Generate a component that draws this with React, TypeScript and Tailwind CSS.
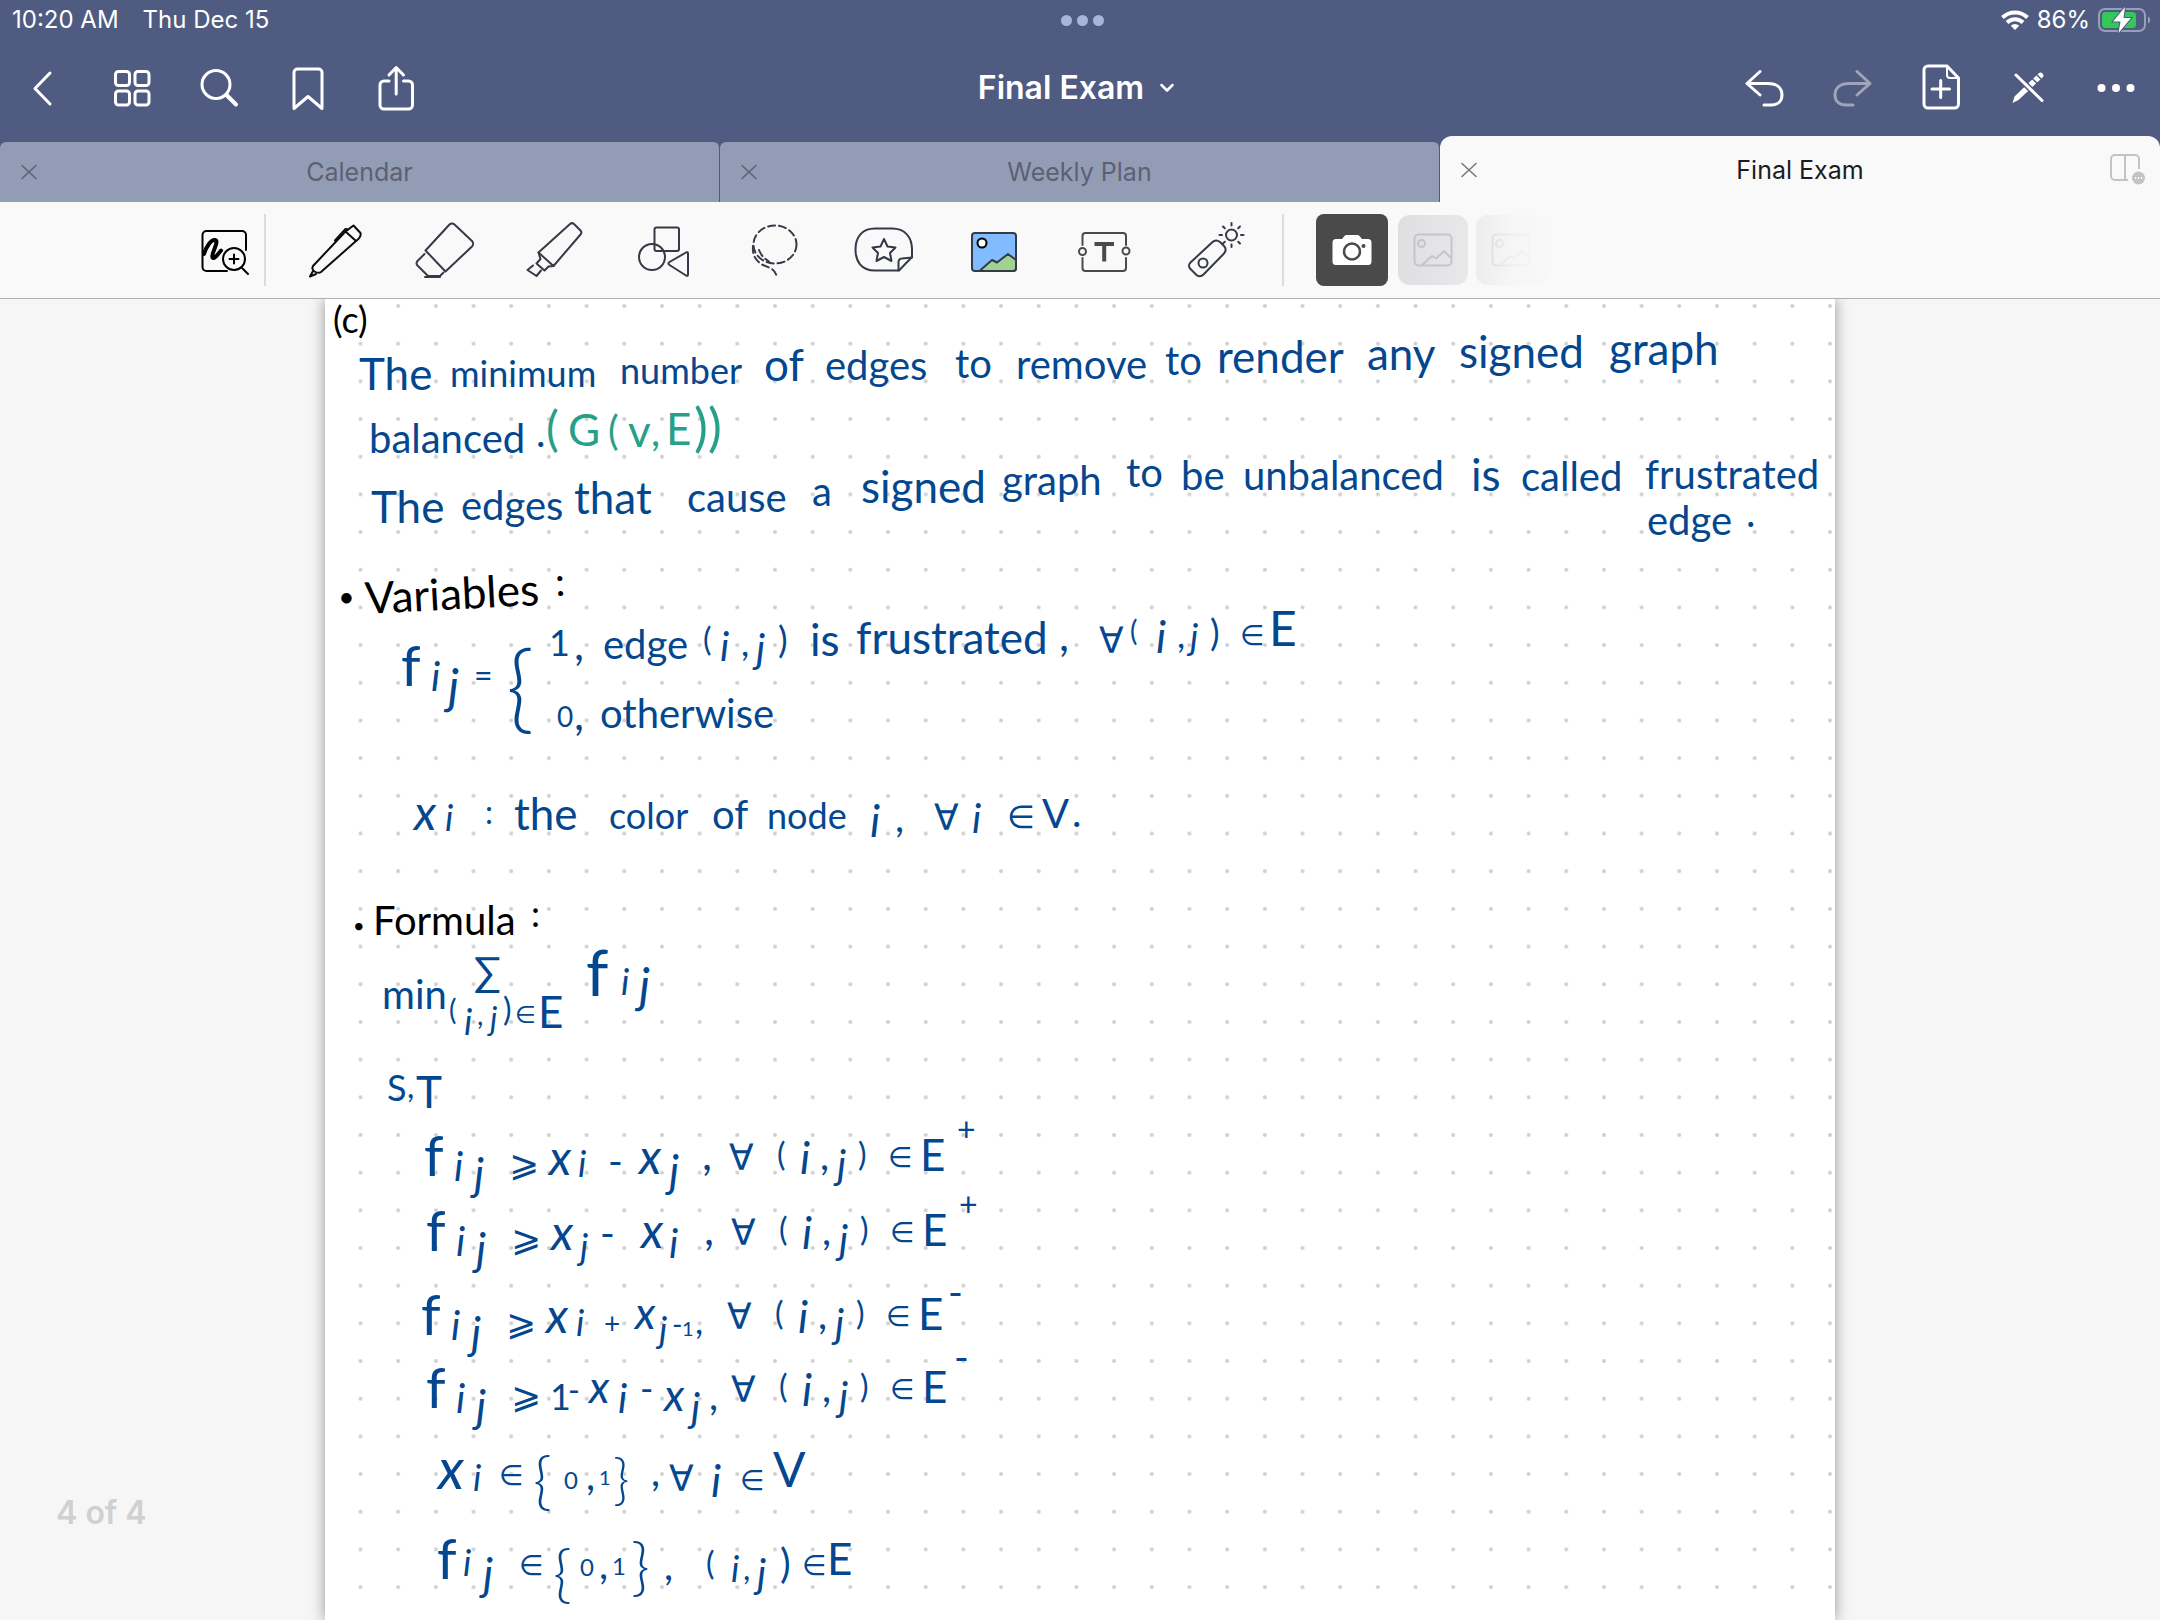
import React from 'react';

type Mark = [text: string, x: number, baseline: number, size: number, italic?: 1];
type Line = { ink: 'black' | 'blue' | 'green'; rising?: boolean; marks: Mark[] };

// Document coordinates of the visible page's top left corner.
const ORIGIN = { x: 325, y: 299 };

const shift = (marks: Mark[], dx: number, dy: number): Mark[] =>
  marks.map(([t, x, y, s, i]) => [t, x + dx, y + dy, s, i]);

const constraintHead: Mark[] = [
  ['f', 424, 1177, 56],
  ['i', 454, 1181, 40, 1],
  ['j', 474, 1190, 44, 1],
  ['⩾', 509, 1176, 36],
];

const constraintTail: Mark[] = [
  ['∀', 729, 1170, 36],
  ['(', 777, 1166, 32],
  ['i', 800, 1174, 44, 1],
  [',', 820, 1170, 40],
  ['j', 837, 1179, 40, 1],
  [')', 858, 1166, 32],
  ['∈', 888, 1167, 28],
  ['E', 920, 1171, 44],
];

const lines: Line[] = [
  { ink: 'black', marks: [['(c)', 333, 333, 36]] },
  {
    ink: 'blue',
    marks: [
      ['The', 359, 390, 44],
      ['minimum', 450, 387, 36],
      ['number', 620, 384, 36],
      ['of', 764, 381, 44],
      ['edges', 825, 380, 40],
      ['to', 955, 378, 40],
      ['remove', 1016, 379, 40],
      ['to', 1165, 375, 40],
      ['render', 1217, 373, 44],
      ['any', 1367, 370, 44],
      ['signed', 1459, 368, 44],
      ['graph', 1609, 365, 44],
    ],
  },
  { ink: 'blue', marks: [['balanced', 369, 453, 40], ['.', 536, 447, 40]] },
  {
    ink: 'green',
    marks: [
      ['(', 546, 447, 48],
      ['G', 568, 446, 44],
      ['(', 608, 445, 40],
      ['v', 628, 447, 44],
      [',', 651, 446, 40],
      ['E', 666, 445, 44],
      ['))', 694, 446, 52],
    ],
  },
  {
    ink: 'blue',
    marks: [
      ['The', 371, 523, 44],
      ['edges', 461, 520, 40],
      ['that', 574, 514, 44],
      ['cause', 687, 512, 40],
      ['a', 812, 506, 40],
      ['signed', 861, 503, 44],
      ['graph', 1002, 495, 40],
      ['to', 1126, 487, 40],
      ['be', 1181, 490, 40],
      ['unbalanced', 1243, 490, 40],
      ['is', 1471, 491, 44],
      ['called', 1521, 491, 40],
      ['frustrated', 1645, 489, 40],
      ['edge', 1647, 535, 40],
      ['.', 1746, 527, 40],
    ],
  },
  { ink: 'black', rising: true, marks: [['•', 339, 607, 28], ['Variables', 366, 614, 44], [':', 556, 596, 40]] },
  {
    ink: 'blue',
    marks: [
      ['f', 401, 687, 56],
      ['i', 431, 691, 40, 1],
      ['j', 448, 705, 48, 1],
      ['=', 474, 687, 32],
      ['{', 506, 721, 96],
      ['1', 549, 656, 36],
      [',', 574, 660, 44],
      ['edge', 603, 659, 40],
      ['(', 703, 651, 32],
      ['i', 720, 661, 40, 1],
      [',', 741, 656, 36],
      ['j', 756, 663, 40, 1],
      [')', 778, 653, 36],
      ['is', 810, 656, 44],
      ['frustrated', 856, 654, 44],
      [',', 1059, 651, 44],
      ['∀', 1099, 653, 36],
      ['(', 1130, 641, 28],
      ['i', 1156, 653, 44, 1],
      [',', 1177, 648, 36],
      ['j', 1190, 650, 36, 1],
      [')', 1210, 646, 36],
      ['∈', 1240, 645, 28],
      ['E', 1269, 647, 48],
      ['0', 557, 727, 28],
      [',', 574, 730, 44],
      ['otherwise', 600, 728, 40],
    ],
  },
  {
    ink: 'blue',
    marks: [
      ['x', 414, 831, 48, 1],
      ['i', 445, 831, 36, 1],
      [':', 485, 824, 32],
      ['the', 514, 830, 44],
      ['color', 609, 829, 36],
      ['of', 712, 829, 40],
      ['node', 767, 829, 36],
      ['i', 870, 837, 44, 1],
      [',', 895, 832, 40],
      ['∀', 934, 830, 36],
      ['i', 972, 833, 40, 1],
      ['∈', 1007, 828, 32],
      ['V', 1042, 828, 40],
      ['.', 1072, 827, 40],
    ],
  },
  { ink: 'black', marks: [['•', 353, 933, 20], ['Formula', 373, 935, 40], [':', 531, 927, 36]] },
  {
    ink: 'blue',
    marks: [
      ['min', 382, 1009, 40],
      ['∑', 474, 986, 40],
      ['(', 449, 1020, 28],
      ['i', 464, 1035, 36, 1],
      [',', 477, 1025, 28],
      ['j', 490, 1030, 32, 1],
      [')', 503, 1021, 32],
      ['∈', 515, 1023, 24],
      ['E', 538, 1028, 44],
      ['f', 586, 997, 64],
      ['i', 621, 995, 36, 1],
      ['j', 639, 1004, 48, 1],
    ],
  },
  { ink: 'blue', marks: [['S', 387, 1101, 36], [',', 407, 1098, 32], ['T', 416, 1108, 44]] },
  {
    ink: 'blue',
    marks: [
      ...constraintHead,
      ['x', 549, 1176, 48, 1],
      ['i', 578, 1177, 36, 1],
      ['-', 608, 1176, 40],
      ['x', 639, 1175, 48, 1],
      ['j', 669, 1187, 44, 1],
      [',', 702, 1170, 44],
      ...constraintTail,
      ['+', 957, 1141, 32],
    ],
  },
  {
    ink: 'blue',
    marks: [
      ...shift(constraintHead, 2, 75),
      ['x', 551, 1251, 48, 1],
      ['j', 580, 1260, 36, 1],
      ['-', 600, 1248, 40],
      ['x', 641, 1249, 48, 1],
      ['i', 669, 1258, 40, 1],
      [',', 704, 1245, 44],
      ...shift(constraintTail, 2, 75),
      ['+', 959, 1216, 32],
    ],
  },
  {
    ink: 'blue',
    marks: [
      ...shift(constraintHead, -3, 159),
      ['x', 546, 1334, 48, 1],
      ['i', 576, 1336, 36, 1],
      ['+', 604, 1334, 28],
      ['x', 635, 1329, 44, 1],
      ['j', 659, 1343, 36, 1],
      ['-', 672, 1335, 28],
      ['1', 682, 1336, 20],
      [',', 695, 1334, 36],
      ...shift(constraintTail, -2, 159),
      ['-', 948, 1307, 40],
    ],
  },
  {
    ink: 'blue',
    marks: [
      ...shift(constraintHead, 2, 232),
      ['1', 550, 1410, 36],
      ['-', 568, 1402, 32],
      ['x', 589, 1403, 44, 1],
      ['i', 618, 1413, 40, 1],
      ['-', 640, 1402, 36],
      ['x', 664, 1411, 44, 1],
      ['j', 691, 1422, 40, 1],
      [',', 709, 1410, 40],
      ...shift(constraintTail, 2, 232),
      ['-', 954, 1372, 40],
    ],
  },
  {
    ink: 'blue',
    marks: [
      ['x', 438, 1490, 56, 1],
      ['i', 473, 1491, 36, 1],
      ['∈', 499, 1485, 28],
      ['{', 533, 1504, 64],
      ['0', 564, 1489, 24],
      [',', 586, 1490, 40],
      ['1', 599, 1485, 20],
      ['}', 613, 1500, 56],
      [',', 651, 1486, 40],
      ['∀', 669, 1491, 36],
      ['i', 711, 1497, 44, 1],
      ['∈', 740, 1490, 28],
      ['V', 773, 1488, 48],
    ],
  },
  {
    ink: 'blue',
    marks: [
      ['f', 437, 1580, 56],
      ['i', 463, 1576, 36, 1],
      ['j', 483, 1590, 44, 1],
      ['∈', 519, 1575, 28],
      ['{', 553, 1597, 64],
      ['0', 580, 1576, 24],
      [',', 599, 1579, 40],
      ['1', 612, 1575, 24],
      ['}', 631, 1590, 64],
      [',', 664, 1580, 40],
      ['(', 706, 1575, 32],
      ['i', 731, 1582, 36, 1],
      [',', 743, 1580, 32],
      ['j', 757, 1588, 40, 1],
      [')', 780, 1578, 40],
      ['∈', 802, 1575, 28],
      ['E', 827, 1575, 44],
    ],
  },
];

const inkClass = {
  black: 'text-black',
  blue: 'text-[#04478f]',
  green: 'text-[#27a089]',
};

function Handwriting({ line }: { line: Line }) {
  return (
    <p className={inkClass[line.ink]}>
      {line.marks.map(([text, x, baseline, size, italic], i) => (
        <React.Fragment key={i}>
          <span
            className={
              'absolute whitespace-nowrap leading-none ' +
              (italic ? 'italic ' : '') +
              (line.rising ? 'origin-bottom-left -rotate-3 ' : '') +
              (text === '{' || text === '}' ? 'font-light' : 'font-normal')
            }
            style={{
              left: x - ORIGIN.x,
              top: Math.round(baseline - ORIGIN.y - size * 0.887),
              fontSize: size,
            }}
          >
            {text}
          </span>{' '}
        </React.Fragment>
      ))}
    </p>
  );
}

function NavButton({ label, dim, children }: { label: string; dim?: boolean; children: React.ReactNode }) {
  return (
    <button aria-label={label} className={'flex h-24 w-22 items-center justify-center ' + (dim ? 'opacity-45' : '')}>
      <svg viewBox="0 0 48 48" className="size-12" fill="none" stroke="white" strokeWidth="3" strokeLinecap="round" strokeLinejoin="round">
        {children}
      </svg>
    </button>
  );
}

function Tool({ label, stroke = '#363a46', children }: { label: string; stroke?: string; children: React.ReactNode }) {
  return (
    <button aria-label={label} className="flex h-24 w-[110px] items-center justify-center pt-0.5">
      <svg viewBox="0 0 64 64" className="size-16" fill="none" stroke={stroke} strokeWidth="2" strokeLinecap="round" strokeLinejoin="round">
        {children}
      </svg>
    </button>
  );
}

function Close({ label }: { label: string }) {
  return (
    <button aria-label={label} className="flex h-full w-[58px] items-center justify-center">
      <svg viewBox="0 0 16 16" className="size-4" fill="none" stroke="currentColor" strokeWidth="1.500" strokeLinecap="round">
        <path d="M1 1.500 15 14.500M15 1.500 1 14.500" />
      </svg>
    </button>
  );
}

function Picture() {
  return (
    <svg viewBox="0 0 40 34" className="h-[34px] w-10" fill="none" stroke="#c4c5c8" strokeWidth="2" strokeLinejoin="round">
      <rect x="1.500" y="1.500" width="37" height="31" rx="4" />
      <circle cx="8.500" cy="10.500" r="3.500" />
      <path d="M9 32 L19 23 L23 25.500 L31 18 L38 25" />
    </svg>
  );
}

function StatusBar() {
  return (
    <div className="grid h-10 grid-cols-[1fr_auto_1fr] items-center pr-2 pl-3 text-2xl leading-none">
      <div className="flex gap-6">
        <span>10:20 AM</span>
        <span>Thu Dec 15</span>
      </div>
      <button aria-label="Multitasking" className="flex gap-[5px]">
        <span className="size-[11px] rounded-full bg-[#a9b5dd]" />
        <span className="size-[11px] rounded-full bg-[#a9b5dd]" />
        <span className="size-[11px] rounded-full bg-[#a9b5dd]" />
      </button>
      <div className="flex items-center justify-end gap-2">
        <svg viewBox="0 0 28 22" className="h-[22px] w-7" fill="none" stroke="white" strokeWidth="4">
          <path d="M1.500 8.500 A18 18 0 0 1 26.500 8.500" />
          <path d="M6 13.500 A11.500 11.500 0 0 1 22 13.500" />
          <path d="M14 21 L9.800 16.800 A6 6 0 0 1 18.200 16.800 Z" fill="white" stroke="none" />
        </svg>
        <span>86%</span>
        <svg viewBox="0 0 54 28" className="h-7 w-[54px]" fill="none">
          <rect x="1" y="3" width="46" height="22" rx="6" stroke="#98a0b8" strokeWidth="2" />
          <path d="M50 10.500 C53 11.500 53 16.500 50 17.500 Z" fill="#98a0b8" />
          <rect x="4" y="6" width="34" height="16" rx="3.500" fill="#34c759" />
          <path d="M27 1 L15 15.500 H22.500 L20.500 27 L33 12 H25.500 Z" fill="white" stroke="#4f5b80" strokeWidth="2" paintOrder="stroke" />
        </svg>
      </div>
    </div>
  );
}

function NavBar() {
  return (
    <nav className="grid h-24 grid-cols-[1fr_auto_1fr] items-center">
      <div className="flex">
        <NavButton label="Back">
          <path d="M30 9 L15 24.500 L30 40" />
        </NavButton>
        <NavButton label="Thumbnails">
          <rect x="7.500" y="7.500" width="14" height="14" rx="3" />
          <rect x="27" y="7.500" width="14" height="14" rx="3" />
          <rect x="7.500" y="27" width="14" height="14" rx="3" />
          <rect x="27" y="27" width="14" height="14" rx="3" />
        </NavButton>
        <NavButton label="Search">
          <circle cx="20" cy="20.500" r="14" />
          <path d="M30.500 31 L40 40.500" strokeWidth="4" />
        </NavButton>
        <NavButton label="Bookmark">
          <path d="M10 8.500 A3.500 3.500 0 0 1 13.500 5 H34.500 A3.500 3.500 0 0 1 38 8.500 V44.500 L24 32.500 L10 44.500 Z" />
        </NavButton>
        <NavButton label="Share">
          <path d="M17 17 H12 A4 4 0 0 0 8 21 V41 A4 4 0 0 0 12 45 H36.500 A4 4 0 0 0 40.500 41 V21 A4 4 0 0 0 36.500 17 H31.500" />
          <path d="M24.200 30 V4 M17 11 L24.200 3.500 L31.500 11" />
        </NavButton>
      </div>
      <button className="mr-2 flex items-center gap-4 text-[32px] leading-10 font-semibold">
        Final Exam
        <svg viewBox="0 0 14 10" className="h-2.5 w-3.5" fill="none" stroke="white" strokeWidth="2.500" strokeLinecap="round" strokeLinejoin="round">
          <path d="M1.500 2 L7 7.500 L12.500 2" />
        </svg>
      </button>
      <div className="flex justify-end">
        <NavButton label="Undo">
          <path d="M20 7.500 L7 19.500 L20 31 M7 19.500 H28 C37 19.500 42 24 42 31 C42 37.500 37.500 41 31 41 H24" />
        </NavButton>
        <NavButton label="Redo" dim>
          <path d="M29 7.500 L42 19.500 L29 31 M42 19.500 H21 C12 19.500 7 24 7 31 C7 37.500 11.500 41 18 41 H25" />
        </NavButton>
        <NavButton label="Add page">
          <path d="M31 2 H12 A4 4 0 0 0 8 6 V40 A4 4 0 0 0 12 44 H38.500 A4 4 0 0 0 42.500 40 V14 Z" />
          <path d="M31 2 V11 A3 3 0 0 0 34 14 H42.500" strokeWidth="2" />
          <path d="M16 25 H33.500 M24.700 16.500 V33.500" />
        </NavButton>
        <NavButton label="Read only mode">
          <path d="M8.500 39 L10.500 32.500 L34.500 9.500 A1.500 1.500 0 0 1 38.500 13.500 L14.500 36 Z" fill="white" stroke="none" />
          <path d="M27.500 14 L34 20 M32 10 L38 16" stroke="#4f5b80" strokeWidth="1.500" />
          <path d="M12.500 11.500 L38 36.500" stroke="#4f5b80" strokeWidth="6" strokeLinecap="butt" />
          <path d="M12 11 L38 36.500" strokeWidth="3" />
        </NavButton>
        <NavButton label="More">
          <g fill="white" stroke="none">
            <circle cx="9.500" cy="24" r="4" />
            <circle cx="24" cy="24" r="4" />
            <circle cx="38.500" cy="24" r="4" />
          </g>
        </NavButton>
      </div>
    </nav>
  );
}

function Tabs() {
  return (
    <div className="grid grid-cols-3 items-end text-[25px] leading-8">
      {['Calendar', 'Weekly Plan'].map((name) => (
        <div
          key={name}
          className="grid h-[60px] grid-cols-[58px_1fr_58px] items-center rounded-t-md border-r border-[#4f5b80] bg-[#939cb5] text-[#5b6172]"
        >
          <Close label={'Close ' + name} />
          <button>{name}</button>
        </div>
      ))}
      <div className="grid h-[66px] grid-cols-[58px_1fr_58px] items-center rounded-t-xl bg-[#f9f9f9] pt-0.5 text-[#777]">
        <Close label="Close Final Exam" />
        <button className="text-[#1c1c1e]">Final Exam</button>
        <button aria-label="Open in split view" className="flex justify-end pr-3.5">
          <svg viewBox="0 0 36 32" className="h-8 w-9" fill="none" stroke="#c3c3c3" strokeWidth="2">
            <path d="M18 26 H5 A4 4 0 0 1 1 22 V5 A4 4 0 0 1 5 1 H25 A4 4 0 0 1 29 5 V15 M15 1 V26" />
            <circle cx="28.500" cy="24" r="6.500" fill="#c3c3c3" stroke="none" />
            <path d="M25 24 H26.300 M28 24 H29.300 M31 24 H32.300" stroke="white" />
          </svg>
        </button>
      </div>
    </div>
  );
}

const rays = [0, 45, 90, 135, 180, 225, 270, 315];

function Toolbar() {
  return (
    <div role="toolbar" aria-label="Tools" className="flex h-[97px] items-center border-b border-[#b0b0b0] bg-[#f9f9f9] pl-46">
      <button aria-label="Zoom window" className="flex h-24 w-20 items-center justify-center pt-0.5">
        <svg viewBox="0 0 64 64" className="size-16" fill="none" stroke="black" strokeWidth="2" strokeLinecap="round" strokeLinejoin="round">
          <path d="M35 52 H14.500 A4 4 0 0 1 10.500 48 V16 A4 4 0 0 1 14.500 12 H50 A4 4 0 0 1 54 16 V31" />
          <path d="M12 35 C14 28 19 20.500 23 21 C28 22 18.500 35 20.500 38.500 C22 41 26 35 29 31.500" strokeWidth="4" />
          <circle cx="42" cy="40" r="11" />
          <path d="M50 49 L56 55 M37.500 40 H46.500 M42 35.500 V44.500" />
        </svg>
      </button>
      <span className="h-18 w-0.5 bg-[#dcdcdc]" />
      <div className="ml-[13px] flex">
        <Tool label="Pen" stroke="#0c0c0c">
          <path d="M11 47 L43.500 12.500 L54 22 L19 53 C17 54.500 15 54 12.500 52.500 C10 51 10 49 11 47 Z" />
          <path d="M43.500 12.500 L51.500 6.500 L58.500 14 C59 16 58 19 54 22 M11 52 L8 57.500 L14 55" />
          <path d="M46 10.500 L43.500 10 L33 21.500" />
        </Tool>
        <Tool label="Eraser">
          <path d="M13.500 31.500 L37.500 5.500 A3.500 3.500 0 0 1 42.500 5.500 L60 22 A4 4 0 0 1 60 27.500 L33.500 52.500 Z" />
          <path d="M12.500 35 L5.500 42 A3.500 3.500 0 0 0 5.500 46.500 L16 57 H28 L31.500 53.500" />
          <path d="M13 58 H28" />
        </Tool>
        <Tool label="Highlighter">
          <path d="M16.500 33.500 L48 5 A3 3 0 0 1 52 5 L58.500 11.500 A3 3 0 0 1 58.500 15.500 L31.500 47 Z" />
          <path d="M16.500 33.500 L18.500 40 L14.500 44.500 L22.500 51.500 L26.500 47.500 L31.500 47 M11 46.500 L5.500 51 L14.500 57 L19 51.500" />
        </Tool>
        <Tool label="Shapes">
          <rect x="22.500" y="8.500" width="24.500" height="23.500" rx="2" />
          <circle cx="20" cy="38" r="13" />
          <path d="M37.500 43 L54 33.500 C55.500 32.800 56 33 56 34.500 V55.500 C56 57 55.500 57.200 54 56.500 L37.500 46 C36 45 36 44 37.500 43 Z" />
        </Tool>
        <Tool label="Lasso">
          <ellipse cx="33" cy="25.500" rx="21.500" ry="19" strokeDasharray="7 4" />
          <path d="M11 27 C10 37 15 43 21 46 C28 49 33 50 34.500 57 M17 31 C19 36 22 39.500 27 42.500" strokeDasharray="7 4" />
        </Tool>
        <Tool label="Elements">
          <path d="M47 51.500 H23 C9 51.500 3.500 42 3.500 30.500 C3.500 18 10 9.500 23 9.500 H40 C53 9.500 60 18 60 30.500 V38 Z" />
          <path d="M46.500 51.500 V43 A3.500 3.500 0 0 1 50 39.500 L60 38.500" />
          <path d="M32 20 L35.500 27.500 L43.500 28.500 L38 34 L39.500 42 L32 38 L24.500 42 L26 34 L20.500 28.500 L28.500 27.500 Z" />
        </Tool>
        <Tool label="Image">
          <rect x="10" y="14" width="44" height="38" rx="3" fill="#80bcff" />
          <path d="M17.500 52 L30 41 L35 43.500 L46 35 L54 41 V49 A3 3 0 0 1 51 52 Z" fill="#a0d392" />
          <circle cx="20" cy="24" r="4.500" fill="white" stroke="black" />
        </Tool>
        <Tool label="Text" stroke="#4a4a4a">
          <path d="M10.500 26 V17 A3 3 0 0 1 13.500 14 H51 A3 3 0 0 1 54 17 V26 M54 39 V49 A3 3 0 0 1 51 52 H13.500 A3 3 0 0 1 10.500 49 V39" />
          <circle cx="10.500" cy="32.500" r="3.500" />
          <circle cx="54" cy="32" r="3.500" />
          <path d="M22.500 25 H42 M32.200 25 V42.500" strokeWidth="4" strokeLinecap="butt" />
        </Tool>
        <Tool label="Laser pointer">
          <path d="M30 23.500 L8.500 43.500 C6.500 45.500 6.500 48 8.500 50 L14.500 56 C17 58 19.500 57.500 21.500 55.500 L42 34.500 C44 32 44 29 42 27 L38 23 C35.500 21 32.500 21 30 23.500 Z" />
          <circle cx="21" cy="44" r="4.500" />
          <circle cx="49.500" cy="16" r="5.500" />
          {rays.map((a) => (
            <path key={a} d="M49.500 6.500 V4" transform={'rotate(' + a + ' 49.500 16)'} />
          ))}
        </Tool>
      </div>
      <span className="ml-[13px] h-18 w-0.5 bg-[#dcdcdc]" />
      <button aria-label="Take a photo" className="ml-8 flex size-18 items-center justify-center rounded-lg bg-[#4a4a4a]">
        <svg viewBox="0 0 40 32" className="h-8 w-10">
          <path
            d="M4 5 H10 L12.500 2 C13.300 1.200 14 1 15 1 H25 C26 1 26.700 1.200 27.500 2 L30 5 H36 A3.500 3.500 0 0 1 39.500 8.500 V27.500 A3.500 3.500 0 0 1 36 31 H4 A3.500 3.500 0 0 1 .500 27.500 V8.500 A3.500 3.500 0 0 1 4 5 Z"
            fill="white"
          />
          <circle cx="20" cy="17.500" r="8" fill="white" stroke="#4a4a4a" strokeWidth="2.500" />
          <circle cx="31.500" cy="12" r="2" fill="#4a4a4a" />
        </svg>
      </button>
      <button aria-label="Recent photo 1" className="ml-2.5 flex size-[70px] items-center justify-center rounded-xl bg-linear-to-r from-[#dfdfe1] to-[#e8e8ea]">
        <Picture />
      </button>
      <button aria-label="Recent photo 2" className="relative ml-2 flex size-[70px] items-center justify-center overflow-hidden rounded-xl bg-[#e8e8ea]">
        <Picture />
        <span className="absolute inset-0 bg-linear-to-r from-[#f9f9f9]/30 via-[#f9f9f9]/80 to-[#f9f9f9]/95" />
      </button>
    </div>
  );
}

export default function App() {
  return (
    <div className="flex min-h-screen flex-col bg-[#f6f6f6] font-['Inter',sans-serif]">
      <header className="bg-[#4f5b80] text-white">
        <StatusBar />
        <NavBar />
        <Tabs />
        <Toolbar />
      </header>
      <main className="relative flex flex-1 justify-center overflow-hidden">
        <article className="relative min-h-[1321px] w-[1510px] max-w-full bg-white font-['Lato','DejaVu_Sans',sans-serif] shadow-[0_0_14px_rgba(0,0,0,0.4)]">
          <svg className="absolute inset-0 h-full w-full" aria-hidden="true">
            <defs>
              <pattern id="dots" x="16.660" y="-11.840" width="37.680" height="37.680" patternUnits="userSpaceOnUse">
                <circle cx="18.840" cy="18.840" r="2" fill="#cfcfcf" />
              </pattern>
            </defs>
            <rect width="100%" height="100%" fill="url(#dots)" />
          </svg>
          {lines.map((line, i) => (
            <Handwriting key={i} line={line} />
          ))}
        </article>
        <p className="absolute bottom-[87px] left-14 text-[32px] leading-10 font-semibold text-[#d0d0d0]">4 of 4</p>
      </main>
    </div>
  );
}
